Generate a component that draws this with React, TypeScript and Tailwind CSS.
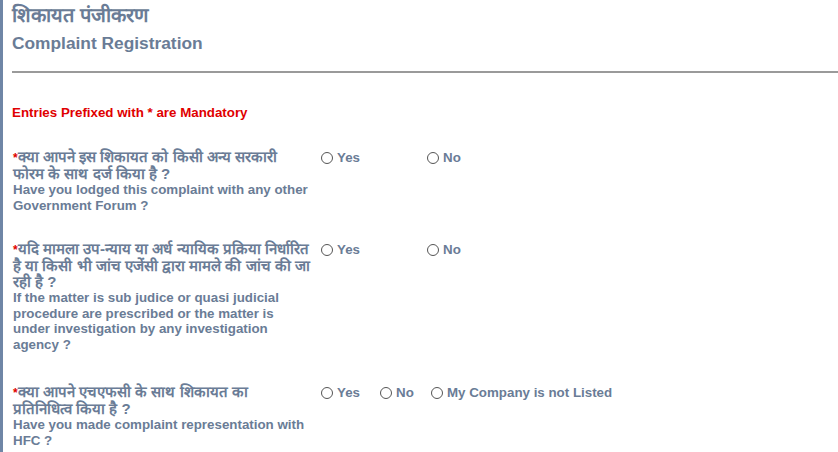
import React from "react";

const questions = [
  {
    hi: ["क्या आपने इस शिकायत को किसी अन्य सरकारी", "फोरम के साथ दर्ज किया है ?"],
    en: "Have you lodged this complaint with any other Government Forum ?",
    wide: true,
  },
  {
    hi: [
      "यदि मामला उप-न्याय या अर्ध न्यायिक प्रक्रिया निर्धारित",
      "है या किसी भी जांच एजेंसी द्वारा मामले की जांच की जा",
      "रही है ?",
    ],
    en: "If the matter is sub judice or quasi judicial procedure are prescribed or the matter is under investigation by any investigation agency ?",
    wide: true,
  },
  {
    hi: ["क्या आपने एचएफसी के साथ शिकायत का", "प्रतिनिधित्व किया है ?"],
    en: "Have you made complaint representation with HFC ?",
    wide: false,
  },
];

function Radio({ label, className }: { label: string; className?: string }) {
  return (
    <label className={`flex items-center gap-[4px] ${className ?? ""}`}>
      <span className="w-[12px] h-[12px] rounded-full border border-[#555] bg-white shrink-0" />
      <span className="text-[13.33px] font-bold leading-[16px]">{label}</span>
    </label>
  );
}

export default function App() {
  return (
    <div className="w-[838px] h-[452px] bg-white overflow-hidden border-l-[3px] border-[#6f86a6] text-[#6a7c96] font-['Liberation_Sans',Arial,sans-serif]">
      <div className="pl-[9px] pt-[3px]">
        <h1 className="text-[20px] font-bold leading-[24px]">शिकायत पंजीकरण</h1>
        <h2 className="text-[17.33px] font-bold leading-[20px] mt-[6px]">Complaint Registration</h2>
      </div>
      <hr className="ml-[9px] mt-[18px] border-0 border-t-2 border-[#9a9a9a]" />
      <p className="pl-[9px] mt-[32px] text-[13.33px] font-bold text-[#e00000] leading-[16px]">
        Entries Prefixed with * are Mandatory
      </p>
      <div className="pl-[10px] mt-[28px] flex flex-col">
        {questions.map((q, i) => (
          <div key={i} className={`flex ${i === 1 ? "mt-[28px]" : i === 2 ? "mt-[32px]" : ""}`}>
            <div className="w-[305px] text-[13.33px] font-bold leading-[15.5px]">
              <p className="font-bold text-[15px] leading-[16px]">
                {q.hi.map((line, j) => (
                  <span key={j} className="block whitespace-nowrap">
                    {j === 0 && <span className="text-[#e00000] text-[12px]">*</span>}
                    {line}
                  </span>
                ))}
              </p>
              <p className="w-[297px]">{q.en}</p>
            </div>
            <div className="flex items-start pl-[3px] pt-[1px]">
              {q.wide ? (
                <>
                  <Radio label="Yes" className="w-[106px]" />
                  <Radio label="No" />
                </>
              ) : (
                <>
                  <Radio label="Yes" className="w-[59px]" />
                  <Radio label="No" className="w-[51px]" />
                  <Radio label="My Company is not Listed" />
                </>
              )}
            </div>
          </div>
        ))}
      </div>
    </div>
  );
}
